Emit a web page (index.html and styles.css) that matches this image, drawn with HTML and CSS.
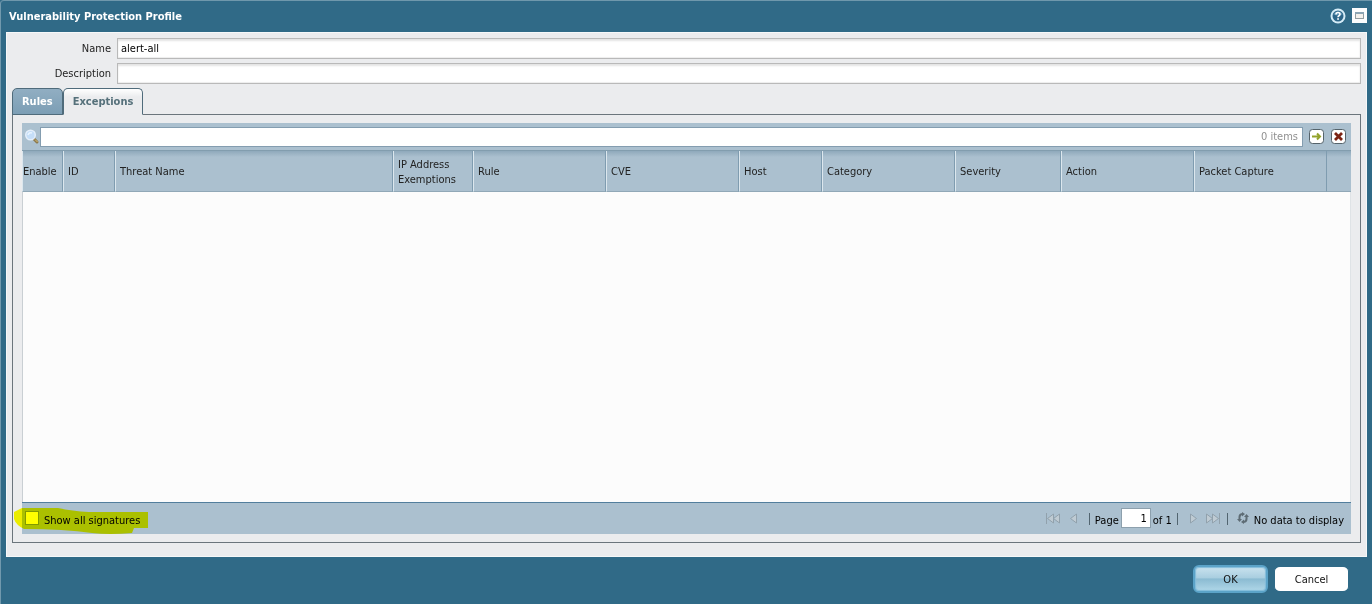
FILE: index.html
```html
<!DOCTYPE html>
<html lang="en">
<head>
<meta charset="utf-8">
<title>Vulnerability Protection Profile</title>
<link rel="stylesheet" href="styles.css">
</head>
<body>
<main class="window">
  <header class="titlebar">
    <h1>Vulnerability Protection Profile</h1>
    <button class="icon-btn" aria-label="Help">
      <svg width="16" height="16" viewBox="0 0 16 16"><circle cx="8" cy="8" r="7.5" fill="#d5ecf7"/><circle cx="8" cy="8" r="5.5" fill="#2d6689"/><path d="M3.4 6.5a5 5 0 0 1 9.2 0q-4.600 2-9.200 0z" fill="#5b91b2"/><path d="M6 6.500q0-2 2-2t2 1.700q0 1-1 1.600t-1 1.400" fill="none" stroke="#fff" stroke-width="1.600"/><rect x="7.200" y="10.200" width="1.700" height="1.600" fill="#fff"/></svg>
    </button>
    <button class="icon-btn" aria-label="Maximize">
      <svg width="15" height="15" viewBox="0 0 15 15"><rect width="15" height="15" fill="#fbfcfd"/><rect x="3.500" y="4.500" width="8" height="6" fill="#f2f0ec" stroke="#929ca0"/><path d="M3 5h9" stroke="#8ba4b3" stroke-width="2"/></svg>
    </button>
  </header>

  <section class="content">
    <form class="fields">
      <label for="name">Name</label>
      <input id="name" type="text" value="alert-all">
      <label for="description">Description</label>
      <input id="description" type="text">
    </form>

    <nav class="tabs">
      <button class="tab">Rules</button>
      <button class="tab tab-active">Exceptions</button>
    </nav>

    <div class="panel">
      <div class="grid">
        <div class="searchbar">
          <svg class="lens" width="16" height="16" viewBox="0 0 16 16"><path d="M10 10l3 3" stroke="#8d794c" stroke-width="3" stroke-linecap="round"/><path d="M11 10.500l2.500 2.500" stroke="#d9c279" stroke-width="1"/><circle cx="6.500" cy="6" r="4.800" fill="#c5def8" stroke="#e5effa" stroke-width="1.400"/><path d="M4 6q1-3 4-2" fill="none" stroke="#e8f4ff" stroke-width="1.500"/></svg>
          <div class="searchbox">
            <input type="text" aria-label="Search">
            <span>0 items</span>
          </div>
          <button class="square-btn" aria-label="Apply filter">
            <svg width="15" height="15" viewBox="0 0 15 15"><rect x=".5" y=".5" width="14" height="14" rx="3" fill="#fff" stroke="#55636b"/><path d="M3 7.500h8M8 4.500l3 3-3 3" fill="none" stroke="#93a32c" stroke-width="2"/></svg>
          </button>
          <button class="square-btn" aria-label="Clear filter">
            <svg width="15" height="15" viewBox="0 0 15 15"><rect x=".5" y=".5" width="14" height="14" rx="3" fill="#fff" stroke="#55636b"/><path d="M4 4l7 7M11 4l-7 7" stroke="#7c2415" stroke-width="2.800"/></svg>
          </button>
        </div>
        <table class="columns">
          <colgroup><col class="w-enable"><col class="w-id"><col><col class="w-ip"><col class="w-std"><col class="w-std"><col class="w-host"><col class="w-std"><col class="w-severity"><col class="w-std"><col class="w-std"><col class="w-end"></colgroup>
          <thead>
            <tr><th>Enable</th><th>ID</th><th>Threat Name</th><th>IP Address Exemptions</th><th>Rule</th><th>CVE</th><th>Host</th><th>Category</th><th>Severity</th><th>Action</th><th>Packet Capture</th><th></th></tr>
          </thead>
        </table>
        <div class="rows"></div>
        <div class="pager">
          <label class="show-all"><input type="checkbox">Show all signatures</label>
          <svg class="marker" width="134" height="28" viewBox="0 0 134 28"><path d="M0 4L8 0H44Q58 3 75 4H134V20H120L118 25Q95 27 78 25Q50 21 10 21Q2 17 0 11z" fill="#ff0"/></svg>
          <div class="paging">
            <button class="page-btn first" aria-label="First page"><svg width="16" height="11" viewBox="0 0 16 11"><path d="M1.500 0v11M8.500 1v9l-6-4.500zM14.500 1v9l-6-4.500z"/></svg></button>
            <button class="page-btn prev" aria-label="Previous page"><svg width="8" height="11" viewBox="0 0 8 11"><path d="M6.500 1v9l-6-4.500z"/></svg></button>
            <span class="rule"></span>
            <label for="page">Page</label>
            <input id="page" type="text" value="1">
            <span>of 1</span>
            <span class="rule"></span>
            <button class="page-btn next" aria-label="Next page"><svg width="8" height="11" viewBox="0 0 8 11"><path d="M1.500 1v9l6-4.500z"/></svg></button>
            <button class="page-btn last" aria-label="Last page"><svg width="16" height="11" viewBox="0 0 16 11"><path d="M14.500 0v11M1.500 1v9l6-4.500zM7.500 1v9l6-4.500z"/></svg></button>
            <span class="rule"></span>
            <button class="page-btn refresh" aria-label="Refresh"><svg width="12" height="12" viewBox="0 0 12 12"><path class="arc" d="M6 10Q9.500 10 9.500 7V4M6 2Q2.500 2 2.500 5v3"/><path class="head" d="M7 7.500v4.500L4 10zM5 0v4.500L8 2zM7 5l2.500-3L12 5zM0 7h5l-2.500 3z"/></svg></button>
            <span class="status">No data to display</span>
          </div>
        </div>
      </div>
    </div>
  </section>

  <footer class="actions">
    <button class="btn btn-primary">OK</button>
    <button class="btn">Cancel</button>
  </footer>
</main>
</body>
</html>
```
FILE: styles.css
```css
* { box-sizing: border-box; }
body {
  margin: 0;
  font: 11px/15px "DejaVu Sans Condensed", "DejaVu Sans", sans-serif;
  color: #222;
  background: #306a87;
}
button, input { font: inherit; color: inherit; margin: 0; }
button { border: 0; padding: 0; background: none; }
svg { display: block; }

.window {
  min-height: 100vh;
  display: flex;
  flex-direction: column;
  padding: 0 5px 0 4px;
  background: #306a87;
  border-left: 1px solid #7199ad;
  border-top: 1px solid #6f98ac;
  border-top-left-radius: 4px;
}
.titlebar {
  height: 31px;
  display: flex;
  align-items: center;
  gap: 6px;
  padding-left: 4px;
}
.titlebar h1 { flex: 1; margin: 0; font-size: 11px; color: #fff; }
.icon-btn { margin-bottom: 2px; }

.content {
  flex: 1;
  display: flex;
  flex-direction: column;
  margin-left: 1px;
  padding: 5px 5px 13px;
  background: #ebecee;
  border: 1px solid #f6f8f9;
}
.fields {
  display: grid;
  grid-template-columns: 99px 1fr;
  gap: 4px 6px;
  align-items: center;
}
.fields label { text-align: right; }
.fields input {
  min-width: 0;
  height: 21px;
  padding: 0 3px;
  background: #fff;
  border: 1px solid #b9b9b9;
  outline: 0;
  color: #000;
  box-shadow: inset 0 2px 2px #e4e4e4, inset 0 -1px 1px #ededed;
}

.tabs { display: flex; margin-top: 4px; position: relative; margin-bottom: -1px; }
.tab {
  height: 27px;
  padding: 0 9px 1px;
  border: 1px solid #4f6b7b;
  border-radius: 5px 5px 0 0;
  background: linear-gradient(#91aec2, #7c9eb5);
  color: #fff;
  font-weight: bold;
}
.tab-active { color: #55707a; border-bottom-color: #ebecee; background: linear-gradient(#fff, #ebecee 8px); }

.panel {
  flex: 1;
  display: flex;
  padding: 8px 9px;
  border: 1px solid #6b757c;
}
.grid {
  flex: 1;
  min-width: 0;
  display: flex;
  flex-direction: column;
  background: #abc0cf;
}
.searchbar {
  height: 28px;
  display: flex;
  align-items: center;
  padding: 0 5px 0 2px;
  border-bottom: 1px solid #829dae;
}
.searchbox {
  flex: 1;
  height: 20px;
  display: flex;
  align-items: center;
  margin-right: 6px;
  padding-right: 4px;
  background: #fff;
  border: 1px solid #849db0;
  color: #909090;
}
.searchbox input { flex: 1; min-width: 0; border: 0; outline: 0; }
.square-btn + .square-btn { margin-left: 7px; }

.columns { width: 100%; table-layout: fixed; border-collapse: separate; border-spacing: 0; }
.columns th {
  height: 41px;
  padding: 1px 4px 0;
  text-align: left;
  font-weight: normal;
  background: linear-gradient(#8fa9bb, #abc0cf 6px);
  border-left: 1px solid #dce7ee;
  border-right: 1px solid #7f9cb0;
  border-bottom: 1px solid #91a8b7;
}
.columns th:first-child { padding-left: 0; padding-right: 0; }
.columns th:last-child { border-right: 0; border-left: 0; }
.w-enable { width: 41px; }
.w-id { width: 52px; }
.w-ip { width: 80px; }
.w-std { width: 133px; }
.w-host { width: 83px; }
.w-severity { width: 106px; }
.w-end { width: 24px; }

.rows { flex: 1; background: #fcfcfc; border-left: 1px solid #c9cfd3; border-right: 1px solid #dfe3e6; }
.pager {
  position: relative;
  min-height: 32px;
  display: flex;
  align-items: center;
  justify-content: space-between;
  padding: 3px 7px 0 3px;
  border-top: 1px solid #527e9d;
  color: #000;
}
.show-all { display: flex; align-items: center; gap: 5px; }
.show-all input {
  appearance: none;
  width: 14px;
  height: 14px;
  margin-bottom: 4px;
  background: #fff;
  border: 1px solid #829aa9;
}
.marker { position: absolute; left: -8px; top: 5px; mix-blend-mode: multiply; pointer-events: none; }
.paging { display: flex; align-items: center; }
.rule { width: 1px; height: 12px; background: #526570; }
.paging label { margin-left: 5px; }
.paging input {
  width: 30px;
  height: 20px;
  margin: 0 2px 4px;
  padding: 0 3px;
  text-align: right;
  background: #fff;
  border: 1px solid #8da0ad;
}
.paging .rule { margin-bottom: 2px; }
.paging span + .rule { margin-left: 5px; }
.page-btn { margin-bottom: 4px; }
.page-btn svg { fill: #bfcbd3; stroke: #91a1ac; }
.first { margin-right: 9px; }
.prev { margin-right: 11px; }
.next { margin: 0 8px 4px 11px; }
.last { margin-right: 6px; }
.refresh { margin-left: 9px; }
.refresh .arc { fill: none; stroke: #5e6c75; stroke-width: 2; }
.refresh .head { fill: #5e6c75; stroke: none; }
.status { margin-left: 5px; }

.actions {
  height: 47px;
  display: flex;
  justify-content: flex-end;
  align-items: flex-start;
  gap: 6px;
  padding: 8px 18px 0 0;
}
.btn {
  width: 75px;
  height: 28px;
  background: #fff;
  border: 2px solid #306a87;
  border-width: 2px 1px;
  border-radius: 6px;
  color: #111;
}
.btn-primary {
  background: linear-gradient(#c9e2ee, #a9cee0 45%, #8bbbd2 50%, #b0d7e8);
  border: 2px solid #5ba3c8;
  box-shadow: inset 0 0 1px 1px #81bcda;
}
```
